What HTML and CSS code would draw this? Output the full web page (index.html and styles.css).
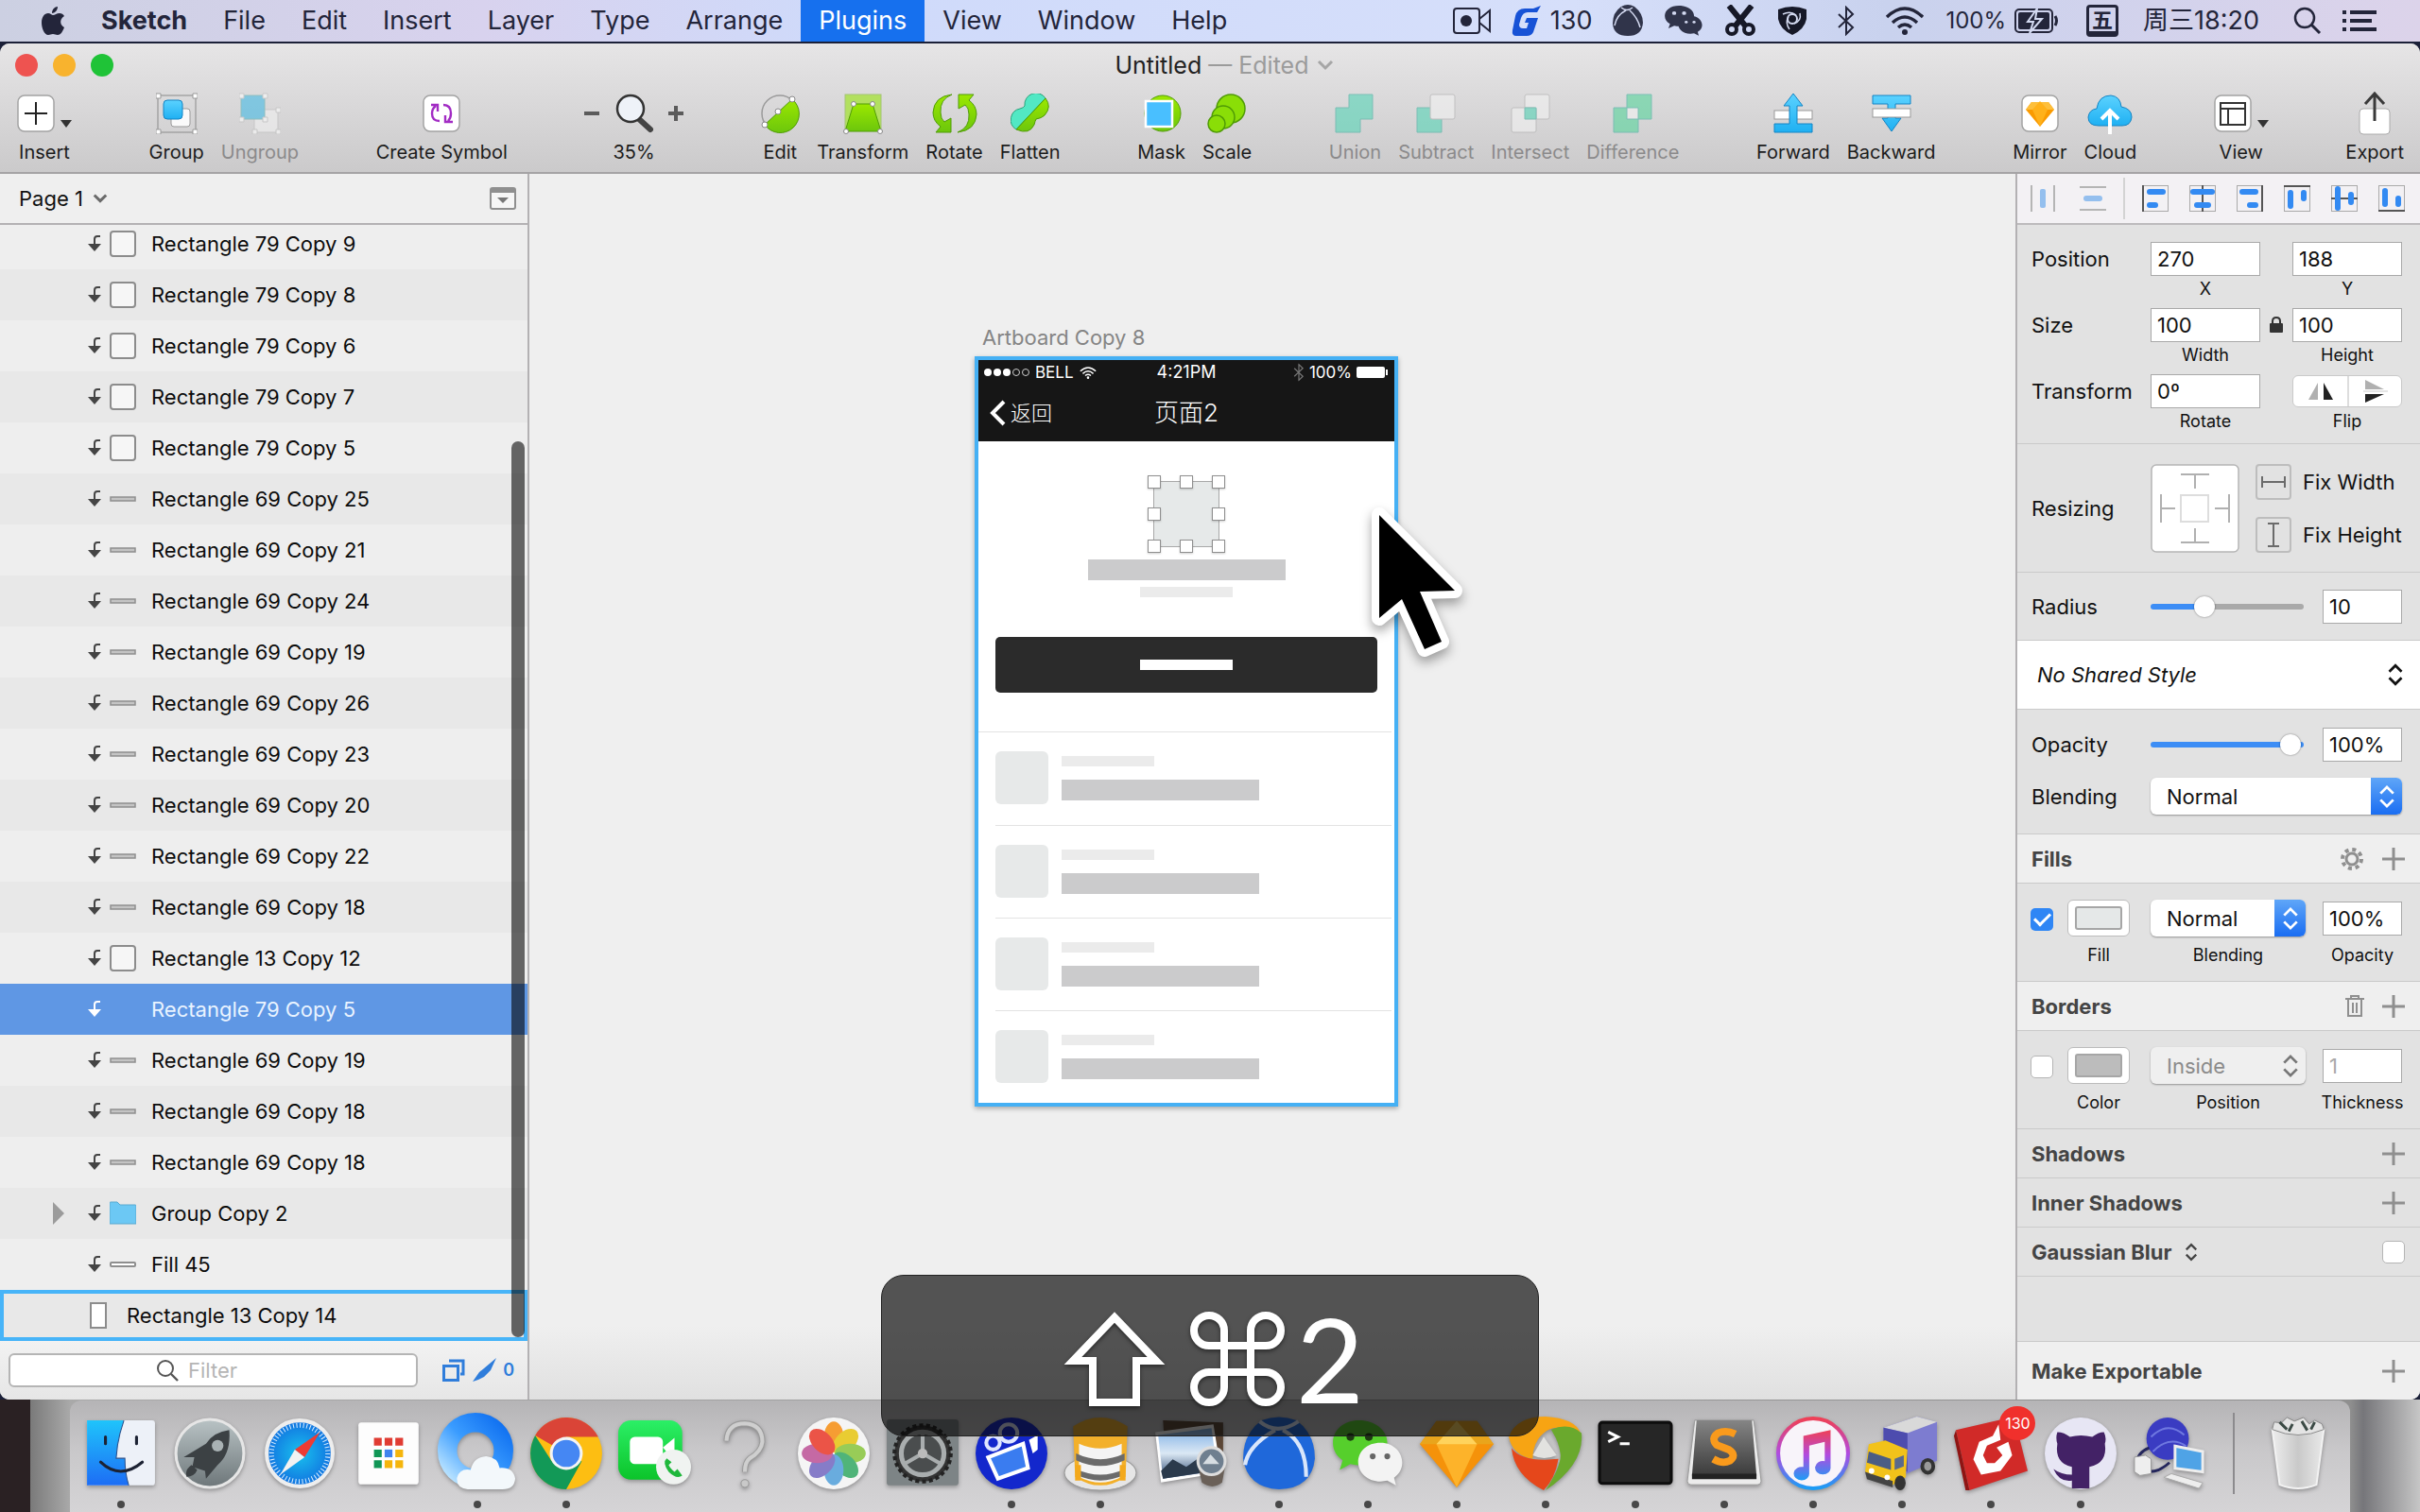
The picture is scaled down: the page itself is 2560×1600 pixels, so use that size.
FILE: index.html
```html
<!DOCTYPE html>
<html lang="en">
<head>
<meta charset="utf-8">
<title>Untitled — Edited</title>
<link rel="stylesheet" href="styles.css">
</head>
<body>
<svg class="defs" aria-hidden="true">
  <defs>
    <symbol id="mask" viewBox="0 0 16 20"><path d="M14 2H11Q8 2 8 5V12" fill="none" stroke="#444" stroke-width="2"/><path d="M1 10H15L8 18Z" fill="#444"/></symbol>
    <symbol id="mask-w" viewBox="0 0 16 20"><path d="M14 2H11Q8 2 8 5V12" fill="none" stroke="#fff" stroke-width="2"/><path d="M1 10H15L8 18Z" fill="#fff"/></symbol>
    <symbol id="square" viewBox="0 0 28 28"><rect x="1" y="1" width="26" height="26" rx="3" fill="#f6f6f6" stroke="#8c8c8c" stroke-width="2"/></symbol>
    <symbol id="bar" viewBox="0 0 28 28"><rect x="1" y="12" width="26" height="4" fill="#c4c4c4" stroke="#8e8e8e" stroke-width="1.5"/></symbol>
    <symbol id="plus" viewBox="0 0 24 24"><path d="M12 0V24M0 12H24" stroke="#8f8f8f" stroke-width="3"/></symbol>
    <symbol id="updown" viewBox="0 0 16 24"><path d="M2 9L8 3L14 9M2 15L8 21L14 15" fill="none" stroke="currentColor" stroke-width="2.5"/></symbol>
    <symbol id="bt" viewBox="0 0 20 32"><path d="M2 9L17 23L10 30V2L17 9L2 23" fill="none" stroke="currentColor" stroke-width="2"/></symbol>
    <symbol id="wifi" viewBox="0 0 42 30"><path d="M2 11Q21 -7 40 11M8 17Q21 5 34 17M14 22Q21 16 28 22" fill="none" stroke="currentColor" stroke-width="3.4"/><circle cx="21" cy="27" r="3" fill="currentColor"/></symbol>
    <symbol id="chat" viewBox="0 0 76 76"><path d="M29 4C13 4 2 14 2 27c0 8 4 14 10 18l-3 10 11-6c20 5 38-6 38-22C58 14 45 4 29 4z" fill="var(--a)"/><circle cx="20" cy="21" r="4" fill="var(--eye)"/><circle cx="39" cy="21" r="4" fill="var(--eye)"/><path d="M51 27c-14 0-23 9-23 20s10 20 23 20l7-1 9 5-2-8c16-11 8-36-14-36z" fill="var(--b)"/><circle cx="43" cy="41" r="3" fill="var(--eye2)"/><circle cx="58" cy="41" r="3" fill="var(--eye2)"/></symbol>
    <linearGradient id="gr" x1="0" y1="0" x2="0" y2="1"><stop offset="0" stop-color="#9be800"/><stop offset="1" stop-color="#6cc60c"/></linearGradient>
    <linearGradient id="bl" x1="0" y1="0" x2="0" y2="1"><stop offset="0" stop-color="#5bd2ff"/><stop offset="1" stop-color="#1fb0f2"/></linearGradient>
    <linearGradient id="finder" x1="0" y1="0" x2="0" y2="1"><stop offset="0" stop-color="#1fc4fb"/><stop offset="1" stop-color="#1d6df5"/></linearGradient>
    <linearGradient id="steel" x1="0" y1="0" x2="0" y2="1"><stop offset="0" stop-color="#b9c3c5"/><stop offset="1" stop-color="#6d7679"/></linearGradient>
    <radialGradient id="saf"><stop offset="0" stop-color="#19c1ee"/><stop offset="1" stop-color="#1172e0"/></radialGradient>
    <linearGradient id="qq" x1="1" y1="0" x2="0" y2="1"><stop offset="0" stop-color="#0f6ff0"/><stop offset=".5" stop-color="#3a9cff"/><stop offset="1" stop-color="#bfe6ff"/></linearGradient>
    <linearGradient id="ft" x1="0" y1="0" x2="0" y2="1"><stop offset="0" stop-color="#2bef66"/><stop offset="1" stop-color="#0cc42a"/></linearGradient>
    <linearGradient id="tun" x1="0" y1="0" x2="0" y2="1"><stop offset="0" stop-color="#ef4056"/><stop offset=".5" stop-color="#b14be0"/><stop offset="1" stop-color="#1c9cf5"/></linearGradient>
    <linearGradient id="subl" x1="0" y1="0" x2="0" y2="1"><stop offset="0" stop-color="#858585"/><stop offset="1" stop-color="#3b3b3b"/></linearGradient>
    <linearGradient id="sea" x1="0" y1="0" x2="0" y2="1"><stop offset="0" stop-color="#7fb0e6"/><stop offset=".5" stop-color="#dbe8f4"/><stop offset="1" stop-color="#2c4a74"/></linearGradient>
    <linearGradient id="bin" x1="0" y1="0" x2="1" y2="0"><stop offset="0" stop-color="#ededed"/><stop offset=".5" stop-color="#c9c9c9"/><stop offset="1" stop-color="#e9e9e9"/></linearGradient>
  </defs>
</svg>

<header class="menubar">
  <nav class="menus" aria-label="Application menu">
    <a class="menu apple" href="#" aria-label="Apple"><svg width="26" height="32" viewBox="0 0 26 32"><path d="M18 1c0 4-3 7-6 7 0-4 3-7 6-7zM25 23c-2 5-4 8-7 8-2 0-3-1-5-1s-3 1-5 1C4 31 1 24 1 18 1 12 4 8 8 8c2 0 4 2 5 2 2 0 4-2 7-2 2 0 4 1 5 3-6 4-4 10 0 12z" fill="#23253a"/></svg></a>
    <a class="menu app" href="#">Sketch</a>
    <a class="menu" href="#">File</a>
    <a class="menu" href="#">Edit</a>
    <a class="menu" href="#">Insert</a>
    <a class="menu" href="#">Layer</a>
    <a class="menu" href="#">Type</a>
    <a class="menu" href="#">Arrange</a>
    <a class="menu on" href="#">Plugins</a>
    <a class="menu" href="#">View</a>
    <a class="menu" href="#">Window</a>
    <a class="menu" href="#">Help</a>
  </nav>
  <div class="status">
    <svg width="40" height="28" viewBox="0 0 40 28"><rect x="1" y="1" width="27" height="26" rx="3" fill="none" stroke="#23253a" stroke-width="2"/><circle cx="14" cy="14" r="6" fill="#23253a"/><path d="M28 12L39 3V25L28 16" fill="none" stroke="#23253a" stroke-width="2"/></svg>
    <span class="pair"><svg width="32" height="34" viewBox="0 0 32 34"><path d="M31 1L27 8H17Q12 8 10 14L8 21Q8 25 12 25H16L18 19H14L16 14H28L23 29Q21 33 16 33H5Q0 33 1 27L4 12Q6 4 14 4H23Z" fill="#1752d6"/></svg>130</span>
    <svg width="32" height="34" viewBox="0 0 32 34"><path d="M9 2Q16-2 23 2 32 9 32 19 31 33 16 33 1 33 0 20 0 8 9 2z" fill="#30344a"/><path d="M9 3Q15 8 21 3M14 6Q4 11 2 22M18 6Q26 13 29 24" fill="none" stroke="#d3d9f0" stroke-width="1.500"/></svg>
    <svg class="tray-chat" width="42" height="36" viewBox="0 0 76 76" preserveAspectRatio="none"><use href="#chat"/></svg>
    <svg width="34" height="34" viewBox="0 0 34 34"><path d="M5 1L22 22M29 1L12 22" stroke="#161827" stroke-width="6"/><circle cx="8" cy="26" r="5" fill="none" stroke="#161827" stroke-width="4"/><circle cx="26" cy="26" r="5" fill="none" stroke="#161827" stroke-width="4"/></svg>
    <svg width="32" height="32" viewBox="0 0 32 32"><path d="M1 4Q16-2 31 4V14Q29 25 16 31 3 25 1 14z" fill="#161827"/><circle cx="16" cy="14" r="5" fill="none" stroke="#d3d9f0" stroke-width="2"/><path d="M6 9Q14 5 20 10M24 8Q26 16 18 19M13 25Q8 18 12 12" fill="none" stroke="#d3d9f0" stroke-width="1.500"/></svg>
    <svg class="tray-bt" width="20" height="32"><use href="#bt"/></svg>
    <svg width="42" height="30"><use href="#wifi"/></svg>
    <span class="pair batt">100%<svg width="46" height="26" viewBox="0 0 46 26"><rect x="1" y="1" width="39" height="24" rx="4" fill="none" stroke="#23253a" stroke-width="2"/><rect x="4" y="4" width="33" height="18" rx="2" fill="#23253a"/><path d="M43 8Q46 13 43 18" stroke="#23253a" stroke-width="3" fill="none"/><path d="M24 0L14 14H20L16 26L29 11H22Z" fill="#23253a" stroke="#d3d9f0" stroke-width="2"/></svg></span>
    <span class="ime">五</span>
    <time>周三18:20</time>
    <svg width="30" height="30" viewBox="0 0 30 30"><circle cx="12" cy="12" r="10" fill="none" stroke="#23253a" stroke-width="2.5"/><path d="M19 19L28 28" stroke="#23253a" stroke-width="3"/></svg>
    <svg width="36" height="22" viewBox="0 0 36 22"><path d="M0 2H4M8 2H36M0 11H4M8 11H31M0 20H4M8 20H36" stroke="#23253a" stroke-width="4"/></svg>
  </div>
</header>

<main class="window">
  <div class="chrome">
    <div class="titlebar">
      <div class="lights"><button class="red" aria-label="Close"></button><button class="amber" aria-label="Minimise"></button><button class="green" aria-label="Zoom"></button></div>
      <h1>Untitled <span>— Edited</span><svg width="18" height="12" viewBox="0 0 18 12"><path d="M2 2L9 9L16 2" fill="none" stroke="#a6a6a6" stroke-width="3"/></svg></h1>
    </div>
    <div class="toolbar">
      <button class="tool"><span class="ico drop"><svg width="40" height="40" viewBox="0 0 40 40"><rect x="1" y="1" width="38" height="38" rx="7" fill="#fff" stroke="#a3a3a3" stroke-width="1.5"/><path d="M20 8V32M8 20H32" stroke="#222" stroke-width="2"/></svg><i class="tri"></i></span>Insert</button>
      <div class="tools">
        <button class="tool"><span class="ico"><svg width="44" height="44" viewBox="0 0 44 44"><rect x="2" y="3" width="40" height="39" fill="none" stroke="#8a8a8a"/><rect x="16" y="17" width="20" height="19" rx="3" fill="#fafafa" stroke="#999"/><rect x="8" y="8" width="20" height="20" rx="4" fill="url(#bl)" stroke="#1484c4"/><path d="M0 1h5v5H0zM39 1h5v5h-5zM0 39h5v5H0zM39 39h5v5h-5z" fill="#fff" stroke="#999"/></svg></span>Group</button>
        <button class="tool off"><span class="ico"><svg width="44" height="44" viewBox="0 0 44 44"><rect x="16" y="18" width="25" height="24" fill="#f4f4f4" stroke="#bbb"/><rect x="2" y="3" width="25" height="25" rx="2" fill="#38b8e6" stroke="#5aa"/><path d="M0 1h5v5H0zM25 1h5v5h-5zM0 26h5v5H0zM25 26h5v5h-5zM39 16h5v5h-5zM14 39h5v5h-5zM39 39h5v5h-5z" fill="#fff" stroke="#bbb"/></svg></span>Ungroup</button>
      </div>
      <button class="tool"><span class="ico"><svg width="40" height="40" viewBox="0 0 40 40"><rect x="1" y="1" width="38" height="38" rx="7" fill="#fff" stroke="#a3a3a3" stroke-width="1.5"/><path d="M18 28Q10 28 10 20 10 15 14 12M9 11H16V18M22 11Q30 11 30 20 30 25 27 28M32 29H24V22" fill="none" stroke="#a22cc4" stroke-width="2.4"/></svg></span>Create Symbol</button>
      <div class="zoom">
        <button class="step" aria-label="Zoom out"><svg width="16" height="16" viewBox="0 0 16 16"><path d="M0 8H16" stroke="#5b5b5b" stroke-width="4"/></svg></button>
        <button class="tool"><span class="ico"><svg width="42" height="42" viewBox="0 0 42 42"><path d="M26 27L38 38" stroke="#444" stroke-width="6" stroke-linecap="round"/><circle cx="17" cy="16" r="14" fill="#eef2f8" stroke="#333" stroke-width="2.5"/></svg></span>35%</button>
        <button class="step" aria-label="Zoom in"><svg width="16" height="16" viewBox="0 0 16 16"><path d="M0 8H16M8 0V16" stroke="#5b5b5b" stroke-width="4"/></svg></button>
      </div>
      <div class="tools">
        <button class="tool"><span class="ico"><svg width="42" height="42" viewBox="0 0 42 42"><circle cx="21" cy="21" r="19" fill="none" stroke="#9a9a9a" stroke-width="1.5"/><path d="M34 6A20 20 0 1 1 5 33Z" fill="url(#gr)" stroke="#4f9b06"/><circle cx="34" cy="6" r="3" fill="#fff" stroke="#888"/><circle cx="19" cy="19" r="3" fill="#fff" stroke="#888"/><circle cx="5" cy="33" r="3" fill="#fff" stroke="#888"/></svg></span>Edit</button>
        <button class="tool"><span class="ico"><svg width="42" height="44" viewBox="0 0 42 44"><rect x="2" y="2" width="38" height="38" fill="#b2e05f" stroke="#a4c474"/><path d="M11 12H31L40 41H2Z" fill="url(#gr)" stroke="#4f9b06"/><g fill="#fff" stroke="#888"><circle cx="11" cy="12" r="2.5"/><circle cx="31" cy="12" r="2.5"/><circle cx="3" cy="41" r="2.5"/><circle cx="39" cy="41" r="2.5"/></g></svg></span>Transform</button>
        <button class="tool"><span class="ico"><svg width="48" height="42" viewBox="0 0 48 42"><path d="M21 1Q8 6 9 20 9 27 13 30L20 26V41H4L9 35Q1 29 1 20 2 3 21 1zM27 41Q40 36 39 22 39 15 35 12L28 16V1H44L39 7Q47 13 47 22 46 39 27 41z" fill="url(#gr)" stroke="#4f9b06"/></svg></span>Rotate</button>
        <button class="tool"><span class="ico"><svg width="42" height="42" viewBox="0 0 42 42"><path d="M37 5A12 12 0 0 0 15 13Q14 15 10 16A12 12 0 0 0 6 38Z" fill="#52e8c4" stroke="#2aa27a"/><path d="M37 5Q44 14 36 23 33 26 27 27 26 29 25 33 20 44 6 38Z" fill="url(#gr)" stroke="#4f9b06"/></svg></span>Flatten</button>
      </div>
      <div class="tools">
        <button class="tool"><span class="ico"><svg width="42" height="42" viewBox="0 0 42 42"><circle cx="22" cy="21" r="19" fill="url(#gr)" stroke="#4f9b06"/><rect x="4" y="8" width="28" height="27" fill="#49bfff" stroke="#fff" stroke-width="2.5"/></svg></span>Mask</button>
        <button class="tool"><span class="ico"><svg width="42" height="42" viewBox="0 0 42 42"><g fill="#8ade07" stroke="#4f9b06" stroke-width="1.5"><circle cx="25" cy="16" r="15"/><circle cx="17" cy="25" r="12"/><circle cx="10" cy="32" r="9"/></g></svg></span>Scale</button>
      </div>
      <div class="tools">
        <button class="tool off"><span class="ico"><svg width="42" height="42" viewBox="0 0 42 42"><path d="M15 1H40V27H27V41H1V15H15Z" fill="#4bd5b4" stroke="#3a9"/></svg></span>Union</button>
        <button class="tool off"><span class="ico"><svg width="42" height="42" viewBox="0 0 42 42"><path d="M1 15H27V41H1Z" fill="#4bd5b4" stroke="#3a9"/><rect x="15" y="1" width="26" height="26" rx="2" fill="#f5f5f5" stroke="#aaa"/></svg></span>Subtract</button>
        <button class="tool off"><span class="ico"><svg width="42" height="42" viewBox="0 0 42 42"><rect x="15" y="1" width="26" height="26" rx="2" fill="#f5f5f5" stroke="#aaa"/><rect x="1" y="15" width="26" height="26" rx="2" fill="#f5f5f5" stroke="#aaa"/><path d="M15 15H27V27H15Z" fill="#4bd5b4" stroke="#3a9"/></svg></span>Intersect</button>
        <button class="tool off"><span class="ico"><svg width="42" height="42" viewBox="0 0 42 42"><path d="M15 1H41V27H27V41H1V15H15Z" fill="#4bd596" stroke="#3a9"/><path d="M15 15H27V27H15Z" fill="#f5f5f5" stroke="#3a9"/></svg></span>Difference</button>
      </div>
      <div class="tools">
        <button class="tool"><span class="ico"><svg width="42" height="44" viewBox="0 0 42 44"><rect x="1" y="19" width="40" height="9" fill="#fff" stroke="#999"/><path d="M21 1L31 14H25V33H41V42H1V33H17V14H11Z" fill="url(#bl)" stroke="#1484c4"/></svg></span>Forward</button>
        <button class="tool"><span class="ico"><svg width="42" height="44" viewBox="0 0 42 44"><path d="M1 3H41V12H25V27H31L21 41L11 27H17V12H1Z" fill="url(#bl)" stroke="#1484c4"/><rect x="1" y="17" width="40" height="9" fill="#fff" stroke="#999"/></svg></span>Backward</button>
      </div>
      <div class="tools">
        <button class="tool"><span class="ico"><svg width="40" height="40" viewBox="0 0 40 40"><rect x="1" y="1" width="38" height="38" rx="7" fill="#fff" stroke="#a3a3a3" stroke-width="1.5"/><path d="M11 8H29L35 16L20 34L5 16Z" fill="#fa9a00"/><path d="M11 8H29L35 16H5Z" fill="#fdbf3c"/><path d="M12 16L20 7L28 16L20 34Z" fill="#ffb11a"/></svg></span>Mirror</button>
        <button class="tool"><span class="ico"><svg width="48" height="44" viewBox="0 0 48 44"><path d="M12 35Q1 35 1 26 2 18 10 17 12 3 25 3 35 4 36 15 47 17 47 26 46 35 37 35Z" fill="url(#bl)" stroke="#1484c4"/><path d="M24 44V20M15 28L24 19L33 28" fill="none" stroke="#fff" stroke-width="4"/></svg></span>Cloud</button>
      </div>
      <button class="tool"><span class="ico drop"><svg width="40" height="40" viewBox="0 0 40 40"><rect x="1" y="1" width="38" height="38" rx="7" fill="#fff" stroke="#a3a3a3" stroke-width="1.5"/><path d="M7 9H33V32H7ZM7 15H33M15 15V32" fill="none" stroke="#333" stroke-width="2"/></svg><i class="tri"></i></span>View</button>
      <button class="tool"><span class="ico"><svg width="34" height="46" viewBox="0 0 34 46"><rect x="1" y="18" width="32" height="27" rx="4" fill="#fff" stroke="#aaa"/><path d="M17 31V3M7 13L17 2L27 13" fill="none" stroke="#3a3a3a" stroke-width="3"/></svg></span>Export</button>
    </div>
  </div>

  <div class="panes">
    <aside class="layers">
      <div class="page-head">
        <button class="page">Page 1<svg width="16" height="12" viewBox="0 0 18 12"><path d="M2 2L9 9L16 2" fill="none" stroke="#6b6b6b" stroke-width="3.4"/></svg></button>
        <button class="icon" aria-label="Toggle pages"><svg width="28" height="24" viewBox="0 0 28 24"><rect x="1" y="1" width="26" height="22" rx="2" fill="#f6f6f6" stroke="#8f8f8f" stroke-width="2"/><path d="M1 1H27V6H1Z" fill="#8f8f8f"/><path d="M8 11H20L14 17Z" fill="#777"/></svg></button>
      </div>
      <div class="list-wrap">
        <ul class="list">
          <li><svg class="m"><use href="#mask"/></svg><svg class="s"><use href="#square"/></svg>Rectangle 79 Copy 9</li>
          <li><svg class="m"><use href="#mask"/></svg><svg class="s"><use href="#square"/></svg>Rectangle 79 Copy 8</li>
          <li><svg class="m"><use href="#mask"/></svg><svg class="s"><use href="#square"/></svg>Rectangle 79 Copy 6</li>
          <li><svg class="m"><use href="#mask"/></svg><svg class="s"><use href="#square"/></svg>Rectangle 79 Copy 7</li>
          <li><svg class="m"><use href="#mask"/></svg><svg class="s"><use href="#square"/></svg>Rectangle 79 Copy 5</li>
          <li><svg class="m"><use href="#mask"/></svg><svg class="s"><use href="#bar"/></svg>Rectangle 69 Copy 25</li>
          <li><svg class="m"><use href="#mask"/></svg><svg class="s"><use href="#bar"/></svg>Rectangle 69 Copy 21</li>
          <li><svg class="m"><use href="#mask"/></svg><svg class="s"><use href="#bar"/></svg>Rectangle 69 Copy 24</li>
          <li><svg class="m"><use href="#mask"/></svg><svg class="s"><use href="#bar"/></svg>Rectangle 69 Copy 19</li>
          <li><svg class="m"><use href="#mask"/></svg><svg class="s"><use href="#bar"/></svg>Rectangle 69 Copy 26</li>
          <li><svg class="m"><use href="#mask"/></svg><svg class="s"><use href="#bar"/></svg>Rectangle 69 Copy 23</li>
          <li><svg class="m"><use href="#mask"/></svg><svg class="s"><use href="#bar"/></svg>Rectangle 69 Copy 20</li>
          <li><svg class="m"><use href="#mask"/></svg><svg class="s"><use href="#bar"/></svg>Rectangle 69 Copy 22</li>
          <li><svg class="m"><use href="#mask"/></svg><svg class="s"><use href="#bar"/></svg>Rectangle 69 Copy 18</li>
          <li><svg class="m"><use href="#mask"/></svg><svg class="s"><use href="#square"/></svg>Rectangle 13 Copy 12</li>
          <li class="sel"><svg class="m"><use href="#mask-w"/></svg><svg class="s"></svg>Rectangle 79 Copy 5</li>
          <li><svg class="m"><use href="#mask"/></svg><svg class="s"><use href="#bar"/></svg>Rectangle 69 Copy 19</li>
          <li><svg class="m"><use href="#mask"/></svg><svg class="s"><use href="#bar"/></svg>Rectangle 69 Copy 18</li>
          <li><svg class="m"><use href="#mask"/></svg><svg class="s"><use href="#bar"/></svg>Rectangle 69 Copy 18</li>
          <li class="folder"><svg class="t" viewBox="0 0 12 24"><path d="M0 0L12 12L0 24Z" fill="#9b9b9b"/></svg><svg class="m"><use href="#mask"/></svg><svg class="s" viewBox="0 0 28 28"><path d="M0 3Q0 2 1 2H8L11 5H27Q28 5 28 6V25H0Z" fill="#6cc8f4" stroke="#58a9d0"/></svg>Group Copy 2</li>
          <li><svg class="m"><use href="#mask"/></svg><svg class="s" viewBox="0 0 28 28"><rect x="1" y="12" width="26" height="4" rx="1" fill="#fff" stroke="#8e8e8e" stroke-width="2"/></svg>Fill 45</li>
          <li class="target"><svg class="tall" viewBox="0 0 18 28"><rect x="1" y="1" width="16" height="26" fill="#fff" stroke="#8c8c8c" stroke-width="2"/></svg>Rectangle 13 Copy 14</li>
        </ul>
        <div class="thumb"></div>
      </div>
      <div class="filter">
        <label class="field"><svg width="24" height="24" viewBox="0 0 24 24"><circle cx="10" cy="10" r="8" fill="none" stroke="#555" stroke-width="2"/><path d="M16 16L23 23" stroke="#555" stroke-width="2.4"/></svg><input type="text" placeholder="Filter" aria-label="Filter"></label>
        <button class="icon" aria-label="Show copies"><svg width="24" height="24" viewBox="0 0 24 24"><rect x="1.500" y="7.500" width="15" height="15" fill="none" stroke="#2f7ddb" stroke-width="3"/><path d="M7 2H22V16H19" fill="none" stroke="#2f7ddb" stroke-width="3"/></svg></button>
        <button class="icon slices"><svg width="26" height="26" viewBox="0 0 26 26"><path d="M25 0L19 13 12 20 6 23 0 25 7 15 12 11Z" fill="#2f7ddb"/></svg>0</button>
      </div>
    </aside>

    <section class="canvas">
      <div class="artboard">
        <span class="name">Artboard Copy 8</span>
        <div class="frame">
          <div class="nav">
            <div class="cell">
              <span class="carrier"><svg width="48" height="12" viewBox="0 0 48 12"><g fill="#fff"><circle cx="4" cy="6" r="4"/><circle cx="14" cy="6" r="4"/><circle cx="24" cy="6" r="4"/></g><g fill="none" stroke="#ccc"><circle cx="34" cy="6" r="3.500"/><circle cx="44" cy="6" r="3.500"/></g></svg>BELL<svg width="18" height="13" viewBox="0 0 42 30"><use href="#wifi"/></svg></span>
              <span class="clock">4:21PM</span>
              <span class="power"><svg class="dim" width="12" height="20" viewBox="0 0 20 32"><use href="#bt"/></svg>100%<svg width="34" height="14" viewBox="0 0 34 14"><rect x="0" y="1" width="30" height="12" rx="2" fill="#fff"/><path d="M32 4V10" stroke="#fff" stroke-width="2"/></svg></span>
            </div>
            <div class="title">
              <a class="back" href="#"><svg width="17" height="28" viewBox="0 0 17 28"><path d="M15 2L3 14L15 26" fill="none" stroke="#fff" stroke-width="4"/></svg>返回</a>
              <span>页面2</span>
            </div>
          </div>
          <div class="hero">
            <div class="pic"><i class="h a"></i><i class="h b"></i><i class="h c"></i><i class="h d"></i><i class="h e"></i><i class="h f"></i><i class="h g"></i><i class="h i"></i></div>
            <div class="dark"></div>
            <div class="light"></div>
            <div class="cta"><div></div></div>
          </div>
          <div class="entry"><div class="avatar"></div><div class="lines"><div class="light"></div><div class="dark"></div></div></div>
          <div class="entry"><div class="avatar"></div><div class="lines"><div class="light"></div><div class="dark"></div></div></div>
          <div class="entry"><div class="avatar"></div><div class="lines"><div class="light"></div><div class="dark"></div></div></div>
          <div class="entry"><div class="avatar"></div><div class="lines"><div class="light"></div><div class="dark"></div></div></div>
        </div>
      </div>
      <svg class="cursor" width="130" height="190" viewBox="0 0 130 190"><path d="M24 23L104 103L67 104L90 157L72 165L48 112L24 132Z" fill="#000" stroke="#fff" stroke-width="16" stroke-linejoin="round" paint-order="stroke"/></svg>
    </section>

    <aside class="inspector">
      <div class="align">
        <button aria-label="Distribute horizontally"><svg width="28" height="28" viewBox="0 0 28 28"><path d="M2 0V28M26 0V28" stroke="#b5b5b5" stroke-width="2"/><rect x="11" y="4" width="6" height="20" rx="2" fill="#94bfee"/></svg></button>
        <button class="dv" aria-label="Distribute vertically"><svg width="28" height="28" viewBox="0 0 28 28"><path d="M0 2H28M0 26H28" stroke="#b5b5b5" stroke-width="2"/><rect x="4" y="11" width="20" height="6" rx="3" fill="#94bfee"/></svg></button>
        <hr>
        <div class="aligns">
        <button aria-label="Align left"><svg width="28" height="28" viewBox="0 0 28 28"><rect x=".5" y=".5" width="27" height="27" fill="none" stroke="#aaa"/><path d="M1 0V28" stroke="#555" stroke-width="2"/><rect x="5" y="4" width="20" height="6" rx="3" fill="#338af2"/><rect x="5" y="18" width="12" height="6" rx="3" fill="#338af2"/></svg></button>
        <button aria-label="Align centre"><svg width="28" height="28" viewBox="0 0 28 28"><rect x=".5" y=".5" width="27" height="27" fill="none" stroke="#aaa"/><path d="M14 0V28" stroke="#555" stroke-width="2"/><rect x="1" y="4" width="26" height="6" rx="3" fill="#338af2"/><rect x="5" y="18" width="18" height="6" rx="3" fill="#338af2"/></svg></button>
        <button aria-label="Align right"><svg width="28" height="28" viewBox="0 0 28 28"><rect x=".5" y=".5" width="27" height="27" fill="none" stroke="#aaa"/><path d="M27 0V28" stroke="#555" stroke-width="2"/><rect x="3" y="4" width="20" height="6" rx="3" fill="#338af2"/><rect x="11" y="18" width="12" height="6" rx="3" fill="#338af2"/></svg></button>
        <button aria-label="Align top"><svg width="28" height="28" viewBox="0 0 28 28"><rect x=".5" y=".5" width="27" height="27" fill="none" stroke="#aaa"/><path d="M0 1H28" stroke="#555" stroke-width="2"/><rect x="4" y="5" width="6" height="20" rx="3" fill="#338af2"/><rect x="18" y="5" width="6" height="12" rx="3" fill="#338af2"/></svg></button>
        <button aria-label="Align middle"><svg width="28" height="28" viewBox="0 0 28 28"><rect x=".5" y=".5" width="27" height="27" fill="none" stroke="#aaa"/><path d="M0 14H28" stroke="#555" stroke-width="2"/><rect x="4" y="1" width="6" height="26" rx="3" fill="#338af2"/><rect x="18" y="7" width="6" height="14" rx="3" fill="#338af2"/></svg></button>
        <button aria-label="Align bottom"><svg width="28" height="28" viewBox="0 0 28 28"><rect x=".5" y=".5" width="27" height="27" fill="none" stroke="#aaa"/><path d="M0 27H28" stroke="#555" stroke-width="2"/><rect x="4" y="3" width="6" height="20" rx="3" fill="#338af2"/><rect x="18" y="11" width="6" height="12" rx="3" fill="#338af2"/></svg></button>
        </div>
      </div>

      <div class="geometry">
        <span class="label">Position</span>
        <div class="unit"><input id="x" type="text" value="270"><label for="x">X</label></div>
        <span></span>
        <div class="unit"><input id="y" type="text" value="188"><label for="y">Y</label></div>
        <span class="label">Size</span>
        <div class="unit"><input id="w" type="text" value="100"><label for="w">Width</label></div>
        <button class="lock" aria-label="Lock proportions"><svg width="14" height="18" viewBox="0 0 14 18"><rect y="7" width="14" height="10" rx="1" fill="#333"/><path d="M3 8V5Q3 1 7 1T11 5V8" fill="none" stroke="#333" stroke-width="2"/></svg></button>
        <div class="unit"><input id="h" type="text" value="100"><label for="h">Height</label></div>
        <span class="label">Transform</span>
        <div class="unit"><input id="r" type="text" value="0º"><label for="r">Rotate</label></div>
        <span></span>
        <div class="unit"><div class="flip"><button aria-label="Flip horizontally"><svg width="30" height="22" viewBox="0 0 30 22"><path d="M12 2V20H2Z" fill="#b0b0b0"/><path d="M18 2V20H28Z" fill="#222"/></svg></button><button aria-label="Flip vertically"><svg width="26" height="24" viewBox="0 0 26 24"><path d="M2 10V0L22 10Z" fill="#b0b0b0"/><path d="M0 12H26" stroke="#ccc"/><path d="M2 15V24L22 15Z" fill="#222"/></svg></button></div><span>Flip</span></div>
      </div>

      <div class="resizing">
        <span class="label">Resizing</span>
        <svg class="pins" viewBox="0 0 94 94"><rect x="1" y="1" width="92" height="92" rx="5" fill="#fff" stroke="#b5b5b5" stroke-width="1.500"/><path d="M32 11H62M47 11V26M32 83H62M47 83V68M11 32V62M11 47H26M83 32V62M83 47H68" stroke="#b0b0b0" stroke-width="2"/><rect x="32" y="33" width="29" height="28" fill="none" stroke="#ddd" stroke-width="2"/></svg>
        <div class="fixes">
          <label><button aria-label="Fix Width"><svg width="26" height="14" viewBox="0 0 26 14"><path d="M1 1V13M25 1V13M1 7H25" stroke="#6b6b6b" stroke-width="2"/></svg></button>Fix Width</label>
          <label><button aria-label="Fix Height"><svg width="14" height="26" viewBox="0 0 14 26"><path d="M1 1H13M1 25H13M7 1V25" stroke="#6b6b6b" stroke-width="2"/></svg></button>Fix Height</label>
        </div>
      </div>

      <div class="slide radius"><label class="label" for="rad">Radius</label><input class="range mid" id="rad" type="range" min="0" max="100" value="33"><input type="text" value="10" aria-label="Radius value"></div>

      <button class="shared"><em>No Shared Style</em><svg width="18" height="26"><use href="#updown"/></svg></button>

      <div class="blend">
        <div class="slide"><label class="label" for="op">Opacity</label><input class="range full" id="op" type="range" min="0" max="100" value="98"><input type="text" value="100%" aria-label="Opacity value"></div>
        <div class="slide"><label class="label" for="bm">Blending</label><div class="pick wide"><select id="bm"><option>Normal</option></select><i><svg width="18" height="28"><use href="#updown"/></svg></i></div></div>
      </div>

      <div class="head lit"><h2>Fills</h2><button class="icon" aria-label="Fill settings"><svg width="26" height="26" viewBox="0 0 26 26"><circle cx="13" cy="13" r="6" fill="none" stroke="#8f8f8f" stroke-width="3"/><circle cx="13" cy="13" r="10" fill="none" stroke="#8f8f8f" stroke-width="4" stroke-dasharray="4 3.850"/></svg></button><button class="icon" aria-label="Add fill"><svg width="24" height="24"><use href="#plus"/></svg></button></div>
      <div class="paint">
        <input type="checkbox" checked aria-label="Fill enabled">
        <div class="unit"><button class="swatch" id="fc" aria-label="Fill colour"><i class="pale"></i></button><label for="fc">Fill</label></div>
        <div class="unit"><div class="pick"><select id="fb"><option>Normal</option></select><i><svg width="18" height="28"><use href="#updown"/></svg></i></div><label for="fb">Blending</label></div>
        <div class="unit last"><input id="fo" type="text" value="100%"><label for="fo">Opacity</label></div>
      </div>

      <div class="head lit"><h2>Borders</h2><button class="icon" aria-label="Delete border"><svg width="20" height="24" viewBox="0 0 20 24"><path d="M0 4H20M6 4V1H14V4M3 4V22H17V4M8 8V19M12 8V19" fill="none" stroke="#8f8f8f" stroke-width="2"/></svg></button><button class="icon" aria-label="Add border"><svg width="24" height="24"><use href="#plus"/></svg></button></div>
      <div class="paint">
        <input type="checkbox" aria-label="Border enabled">
        <div class="unit"><button class="swatch" id="bc" aria-label="Border colour"><i></i></button><label for="bc">Color</label></div>
        <div class="unit"><div class="pick dis"><select id="bp" disabled><option>Inside</option></select><i><svg width="18" height="28"><use href="#updown"/></svg></i></div><label for="bp">Position</label></div>
        <div class="unit last"><input id="thick" type="text" value="1" disabled><label for="thick">Thickness</label></div>
      </div>

      <div class="head"><h2>Shadows</h2><button class="icon" aria-label="Add shadow"><svg width="24" height="24"><use href="#plus"/></svg></button></div>
      <div class="head"><h2>Inner Shadows</h2><button class="icon" aria-label="Add inner shadow"><svg width="24" height="24"><use href="#plus"/></svg></button></div>
      <div class="head"><h2>Gaussian Blur<svg width="14" height="22"><use href="#updown"/></svg></h2><input type="checkbox" aria-label="Gaussian Blur"></div>
      <div class="spacer"></div>
      <div class="head lit export"><h2>Make Exportable</h2><button class="icon" aria-label="Add export"><svg width="24" height="24"><use href="#plus"/></svg></button></div>
    </aside>
  </div>
</main>

<footer class="desk">
  <div class="dock">
    <div class="app-slot run"><svg viewBox="0 0 76 76"><rect x="3" y="4" width="70" height="67" rx="3" fill="#edf1f8"/><path d="M3 4H41Q34 24 33 43H42Q42 58 46 71H3Z" fill="url(#finder)"/><path d="M41 4Q34 24 33 43H42Q42 58 46 71" fill="none" stroke="#2a4f8a"/><path d="M22 21V28M54 21V28M17 47Q37 66 60 47" fill="none" stroke="#1c2233" stroke-width="3" stroke-linecap="round"/></svg></div>
    <div class="app-slot"><svg viewBox="0 0 76 76"><circle cx="38" cy="38" r="35" fill="url(#steel)" stroke="#e6e6e6" stroke-width="3"/><path d="M58 14Q42 16 34 28L24 34 11 42 22 42 20 52 33 56 34 64 46 50Q60 38 58 14zM19 50Q12 55 14 62 22 62 25 55z" fill="#3c4144"/><circle cx="46" cy="30" r="6" fill="#a9b2b4"/></svg></div>
    <div class="app-slot"><svg viewBox="0 0 76 76"><circle cx="38" cy="38" r="34" fill="url(#saf)" stroke="#eee" stroke-width="4"/><circle cx="38" cy="38" r="29" fill="none" stroke="#d8ecff" stroke-width="5" stroke-dasharray="1 2.500"/><path d="M59 16L43 42 33 34Z" fill="#ee3b33"/><path d="M18 60L33 34 43 42Z" fill="#f2f2f2"/></svg></div>
    <div class="app-slot"><svg viewBox="0 0 76 76"><rect x="7" y="6" width="62" height="64" rx="3" fill="#fdfdfd"/><g fill="#e03c33"><path d="M23 22h8v8h-8zM34 22h8v8h-8zM45 22h8v8h-8z"/></g><path d="M23 34h8v8h-8zM23 45h8v8h-8z" fill="#109655"/><path d="M34 34h8v8h-8z" fill="#4083ee"/><path d="M45 34h8v8h-8zM34 45h8v8h-8zM45 45h8v8h-8z" fill="#f5b50c"/></svg></div>
    <div class="app-slot run"><svg viewBox="0 0 76 76"><circle cx="36" cy="35" r="29" fill="none" stroke="url(#qq)" stroke-width="20"/><path d="M28 75Q16 74 17 63 20 53 31 55 34 42 47 41 59 42 61 53 75 52 77 64 76 75 64 75Z" fill="#f3f8fb"/></svg></div>
    <div class="app-slot run"><svg viewBox="0 0 76 76"><circle cx="38" cy="38" r="37" fill="#fdbe12"/><path d="M38 38L6 19.500A37 37 0 0 1 71 21H38Z" fill="#da4437"/><path d="M6 19.500A37 37 0 0 0 38 75L54 46 23 46Z" fill="#129957"/><circle cx="38" cy="38" r="17" fill="#f4f4f4"/><circle cx="38" cy="38" r="14" fill="#4587f3"/></svg></div>
    <div class="app-slot"><svg viewBox="0 0 76 76"><rect x="0" y="4" width="66" height="61" rx="13" fill="url(#ft)"/><rect x="12" y="21" width="34" height="28" rx="5" fill="#fff"/><path d="M46 32L58 22V46Z" fill="#fff"/><circle cx="57" cy="52" r="18" fill="#f0f3f1"/><path d="M50 43Q45 47 52 57 60 65 66 61L61 54 58 57Q53 53 52 50L55 47Z" fill="#1fb83c"/></svg></div>
    <div class="app-slot"><svg viewBox="0 0 76 76"><path d="M19 25Q20 7 38 7 56 8 56 26 55 36 43 43 38 47 38 57" fill="none" stroke="#9b9b9b" stroke-width="6"/><path d="M19 25Q20 7 38 7 56 8 56 26 55 36 43 43 38 47 38 57" fill="none" stroke="#cfcfcf" stroke-width="4"/><circle cx="38" cy="69" r="4" fill="#c9c9c9" stroke="#999"/></svg></div>
    <div class="app-slot"><svg viewBox="0 0 76 76"><circle cx="38" cy="38" r="37" fill="#f5f5f5"/><g opacity=".9"><ellipse cx="38" cy="21" rx="10" ry="16" fill="#f7941f"/><ellipse cx="38" cy="21" rx="10" ry="16" fill="#e8c81e" transform="rotate(45 38 38)"/><ellipse cx="38" cy="21" rx="10" ry="16" fill="#8fc846" transform="rotate(90 38 38)"/><ellipse cx="38" cy="21" rx="10" ry="16" fill="#3fae6c" transform="rotate(135 38 38)"/><ellipse cx="38" cy="21" rx="10" ry="16" fill="#5aa5dc" transform="rotate(180 38 38)"/><ellipse cx="38" cy="21" rx="10" ry="16" fill="#7a6fc4" transform="rotate(225 38 38)"/><ellipse cx="38" cy="21" rx="10" ry="16" fill="#c05a9c" transform="rotate(270 38 38)"/><ellipse cx="38" cy="21" rx="10" ry="16" fill="#ea4335" transform="rotate(315 38 38)"/></g></svg></div>
    <div class="app-slot"><svg viewBox="0 0 76 76"><rect x="1" y="3" width="74" height="68" rx="3" fill="#7d8486"/><circle cx="38" cy="38" r="29" fill="#333" stroke="#222" stroke-width="4" stroke-dasharray="4 3"/><circle cx="38" cy="38" r="22" fill="#4a4d4e" stroke="#a9adae" stroke-width="5"/><path d="M38 38V16M38 38L19 49M38 38L57 49" stroke="#a9adae" stroke-width="4"/><circle cx="38" cy="38" r="5" fill="#bbb"/></svg></div>
    <div class="app-slot run"><svg viewBox="0 0 76 76"><circle cx="38" cy="38" r="37" fill="#1327cc"/><circle cx="19" cy="27" r="7" fill="none" stroke="#dfe6ff" stroke-width="4"/><circle cx="35" cy="17" r="9" fill="none" stroke="#dfe6ff" stroke-width="4"/><path d="M14 42L50 28 55 53 24 64Z" fill="#3a7cf0" stroke="#fff" stroke-width="4"/><path d="M56 24L65 19V34L60 38Z" fill="#fff"/></svg></div>
    <div class="app-slot run"><svg viewBox="0 0 76 76"><ellipse cx="38" cy="58" rx="37" ry="18" fill="#e6e6e6" stroke="#999"/><path d="M10 10Q38-8 66 10L64 62Q38 80 12 62Z" fill="#f3b02a"/><path d="M16 28Q38 38 60 28V62Q38 74 16 62Z" fill="#f4f4f4"/><path d="M13 38Q38 50 63 38V45Q38 57 13 45ZM13 54Q38 66 63 54V60Q38 72 13 60Z" fill="#6b6b6b"/><path d="M15 50V66M61 50V66" stroke="#f3a91c" stroke-width="6"/></svg></div>
    <div class="app-slot"><svg viewBox="0 0 76 76"><path d="M10 4L72 6V62L14 60Z" fill="#5b4636"/><path d="M2 16L62 8 70 58 8 68Z" fill="#fff"/><path d="M5 19L60 12 66 56 10 64Z" fill="url(#sea)"/><path d="M8 56L20 44 34 52 48 42 50 58 10 64Z" fill="#2b3a4c"/><path d="M45 46H75L71 68Q61 76 50 68z" fill="#6a6058"/><circle cx="60" cy="46" r="14" fill="#6f7f8f" stroke="#ddd" stroke-width="3"/><path d="M51 49L59 39 68 49Z" fill="#d6dde2"/></svg></div>
    <div class="app-slot run"><svg viewBox="0 0 76 76"><path d="M20 4Q38-3 56 4 75 18 75 43 72 74 38 75 5 73 1 43 1 18 20 4z" fill="#1f68da"/><path d="M18 5Q36 20 58 5M34 14Q6 30 3 50M42 14Q66 26 66 62" fill="none" stroke="#d9e6fb" stroke-width="4"/></svg></div>
    <div class="app-slot run dock-chat"><svg viewBox="0 0 76 76"><use href="#chat"/></svg></div>
    <div class="app-slot run"><svg viewBox="0 0 80 76"><path d="M18 3H62L80 28 40 75 0 28Z" fill="#f5920a"/><path d="M18 3H62L80 28H0Z" fill="#e9a51c"/><path d="M18 28L40 3 62 28 40 75Z" fill="#fdb32a"/><path d="M18 28L40 3 62 28Z" fill="#ffd35c"/></svg></div>
    <div class="app-slot run"><svg viewBox="0 0 80 80"><path d="M0 22Q8 0 40 0 72 2 78 18 50 6 38 18 26 28 26 46 4 42 0 22z" fill="#f7a413"/><path d="M3 34Q14 50 54 46 50 68 38 80 6 64 3 34z" fill="#e5471b"/><path d="M46 14Q66 6 79 18 82 52 40 80 58 52 56 40 54 26 46 14z" fill="#6aa92d"/><path d="M38 22L52 42Q38 48 26 42Z" fill="#e2e2e0"/></svg></div>
    <div class="app-slot run"><svg viewBox="0 0 76 76"><rect x="1" y="6" width="74" height="63" rx="3" fill="#262626" stroke="#0d0d0d" stroke-width="3"/><path d="M10 16L20 21 10 26M22 28H32" fill="none" stroke="#fff" stroke-width="3"/></svg></div>
    <div class="app-slot run"><svg viewBox="0 0 80 76"><path d="M8 2H72L80 68Q80 72 76 72H4Q0 72 0 68Z" fill="#ececec" stroke="#999"/><path d="M10 2H70L75 62H5Z" fill="url(#subl)"/><path d="M5 60H75V66H5Z" fill="#222"/><path d="M52 17Q42 12 33 16 25 22 32 29L45 34Q54 40 46 46 38 50 28 44" fill="none" stroke="#f99a1c" stroke-width="8"/></svg></div>
    <div class="app-slot run"><svg viewBox="0 0 76 76"><circle cx="38" cy="38" r="36" fill="#f8f4fa" stroke="url(#tun)" stroke-width="4"/><path d="M28 20L56 14V52A8 7 0 1 1 50 46V26L34 30V58A8 7 0 1 1 28 52Z" fill="url(#tun)"/></svg></div>
    <div class="app-slot run"><svg viewBox="0 0 80 80"><path d="M20 12L56 0 78 6V48L40 64 20 46Z" fill="#7d7cd0"/><path d="M20 12L56 0 78 6 46 18Z" fill="#d9d9d9"/><path d="M20 12L46 18V60L20 50Z" fill="#4d4cae"/><ellipse cx="68" cy="54" rx="8" ry="9" fill="#333"/><ellipse cx="68" cy="54" rx="4" ry="5" fill="#999"/><path d="M4 30L22 26 46 36 44 66 30 74 0 60Z" fill="#f2c21a"/><path d="M4 38L28 46V58L2 50Z" fill="#4b5d84"/><path d="M32 46L42 42V54L32 58Z" fill="#5a6a8c"/><path d="M0 60L30 70V77L2 68Z" fill="#444"/><ellipse cx="38" cy="72" rx="6" ry="8" fill="#333"/><circle cx="7" cy="59" r="3" fill="#fff"/><circle cx="24" cy="66" r="3" fill="#fff"/></svg></div>
    <div class="app-slot run"><svg viewBox="0 0 76 76"><path d="M2 14L62 0 76 56 16 76Z" fill="#d12a28"/><path d="M2 14L0 20 12 76 16 76Z" fill="#8f1413"/><path d="M46 8L40 20 26 26 20 44 28 60 48 56 60 40 56 26 44 32 50 40 42 48 34 48 30 40 34 30 48 24Z" fill="#fff"/></svg><span class="badge">130</span></div>
    <div class="app-slot run"><svg viewBox="0 0 76 76"><circle cx="38" cy="38" r="37" fill="#e7e6f4"/><path d="M14 16Q21 16 27 21 38 18 50 21 56 16 62 16 65 22 63 28 66 48 47 52V74H29V66Q16 68 10 54 18 60 29 60V52Q11 48 14 28 12 22 14 16z" fill="#432266"/></svg></div>
    <div class="app-slot"><svg viewBox="0 0 80 80"><circle cx="38" cy="24" r="23" fill="#3a3cc2"/><path d="M20 22Q38 4 56 20M22 38Q40 20 58 32" fill="none" stroke="#6f78e0" stroke-width="2"/><path d="M18 34Q2 40 6 56 22 66 40 50" fill="none" stroke="#24265c" stroke-width="3"/><path d="M2 44L14 42 20 46V62L8 64 2 60Z" fill="#eee" stroke="#999"/><path d="M46 32L76 38V60L46 56Z" fill="#4fa3e6" stroke="#eee" stroke-width="3"/><path d="M34 66L42 62 76 72 72 78Z" fill="#eee" stroke="#aaa"/></svg></div>
    <hr>
    <div class="trash"><svg viewBox="0 0 64 80"><path d="M4 14L12 74Q32 82 52 74L60 14Z" fill="url(#bin)" stroke="#f3f3f3" stroke-width="2"/><path d="M4 14Q32 26 60 14L58 8 50 4 44 8 38 1 28 5 20 1 14 7 6 6Z" fill="#e4e4e4" stroke="#888"/><path d="M12 6L20 14M26 8L22 16M36 5L42 15M50 6L46 14" stroke="#3b4a45" stroke-width="3"/></svg></div>
  </div>
</footer>

<div class="keys" role="status" aria-label="Shift Command 2">
  <svg width="108" height="104" viewBox="0 0 108 104"><path d="M54 8L98 54H77V98H31V54H10Z" fill="none" stroke="#fff" stroke-width="8"/></svg>
  <svg width="100" height="100" viewBox="0 0 100 100"><path d="M36 20V80A16 16 0 1 1 20 64H80A16 16 0 1 1 64 80V20A16 16 0 1 1 80 36H20A16 16 0 1 1 36 20Z" fill="none" stroke="#fff" stroke-width="8"/></svg>
  <span>2</span>
</div>
</body>
</html>
```
FILE: styles.css
```css
* { box-sizing: border-box; }
body {
  margin: 0;
  min-height: 100vh;
  display: flex;
  flex-direction: column;
  position: relative;
  background: #1b2038;
  font: 22px/26px Inter, "Noto Sans CJK SC", sans-serif;
  color: #111;
}
button, input, select { font: inherit; color: inherit; margin: 0; }
button { border: 0; padding: 0; background: none; }
a { color: inherit; text-decoration: none; }
svg { display: block; flex: none; }
ul, h1, h2 { margin: 0; padding: 0; font-weight: 400; list-style: none; }
.defs { position: absolute; width: 0; height: 0; }

/* menu bar */
.menubar {
  height: 44px;
  margin-bottom: 2px;
  display: flex;
  justify-content: space-between;
  background: linear-gradient(90deg, #ccd0e2, #d8d2ee 20%, #cfdafa 34%, #d6dffa 65%, #c9d2ee 78%, #dcd3ea);
  color: #23253a;
  font-size: 27px;
}
.menus, .status, .pair { display: flex; align-items: center; }
.menus { padding-left: 24px; }
.menu { height: 44px; padding: 0 19px; line-height: 44px; }
.apple { display: flex; align-items: center; }
.app { font-weight: 700; }
.on { background: #1670ee; color: #fff; }
.status { gap: 22px; padding-right: 46px; }
.pair { gap: 9px; }
.batt { font-size: 24px; }
.tray-chat { --a: #30344a; --b: #30344a; --eye: #d3d9f0; --eye2: #d3d9f0; }
.status .tray-bt { margin: 0 9px; }
.status time { margin: 0 14px 0 4px; }
.ime { width: 34px; height: 34px; margin-left: 8px; border: 3px solid #23253a; border-bottom-width: 6px; border-radius: 4px; font-size: 22px; line-height: 26px; text-align: center; font-weight: 700; }

/* window */
.window { flex: 1; display: flex; flex-direction: column; border-radius: 10px; overflow: hidden; background: #efefef; }
.chrome { background: linear-gradient(#e6e5e6, #cbcacb); border-bottom: 2px solid #a5a3a5; }
.titlebar { height: 46px; display: grid; grid-template-columns: 1fr auto 1fr; align-items: center; padding: 0 16px; }
.lights { display: flex; gap: 16px; }
.lights button { width: 24px; height: 24px; border-radius: 50%; }
.red { background: #ee5350; }
.amber { background: #f8b32e; }
.green { background: #1fc337; }
.titlebar h1 { display: flex; align-items: center; font-size: 25px; color: #222; white-space: pre; padding-left: 30px; }
.titlebar h1 span { color: #9b9b9b; }
.titlebar h1 svg { margin-left: 8px; }
.toolbar { display: flex; justify-content: space-between; padding: 6px 17px 9px 18px; }
.tools { display: flex; gap: 18px; }
.tool { display: flex; flex-direction: column; align-items: center; gap: 7px; font-size: 20px; line-height: 24px; color: #1c1c1c; }
.ico { height: 44px; display: flex; align-items: center; justify-content: center; }
.drop { gap: 6px; }
.tri { margin-top: 22px; border: 6px solid transparent; border-top: 8px solid #333; border-bottom: 0; }
.off { color: #8b8a8b; }
.off svg { opacity: .55; }
.zoom { display: flex; gap: 14px; }
.step { height: 44px; display: flex; align-items: center; }

.panes { flex: 1; display: grid; grid-template-columns: 560px 1fr 428px; }

/* layer list */
.layers { display: flex; flex-direction: column; border-right: 2px solid #b3b1b3; background: #efefef; }
.page-head { height: 54px; display: flex; align-items: center; justify-content: space-between; padding: 0 12px 0 20px; border-bottom: 2px solid #b3b1b3; }
.page { display: flex; align-items: center; gap: 10px; }
.list-wrap { flex: 1 1 0; position: relative; overflow: hidden; display: flex; flex-direction: column; justify-content: flex-end; }
.list li { height: 54px; display: flex; align-items: center; padding-left: 92px; background: #eee; color: #0c0c0c; }
.list li:nth-child(even) { background: #e8e8e8; }
.list li.sel { background: #5f97e4; color: #e9f3ff; }
.list li.folder { padding-left: 56px; }
.list li.target { border: 4px solid #47b4f8; padding-left: 91px; }
.m { width: 16px; height: 20px; margin-right: 8px; }
.s { width: 28px; height: 28px; margin-right: 16px; }
.t { width: 12px; height: 24px; margin-right: 24px; }
.tall { width: 18px; height: 28px; margin-right: 21px; }
.thumb { position: absolute; right: 3px; top: 229px; bottom: 4px; width: 14px; border-radius: 7px; background: rgba(0, 0, 0, .58); }
.filter { height: 62px; display: flex; align-items: center; padding: 0 14px 0 9px; background: linear-gradient(#f2f2f2, #e6e6e6); color: #2f7ddb; font-size: 18px; }
.field { flex: 1; height: 36px; display: flex; align-items: center; gap: 10px; padding-left: 154px; margin-right: 26px; border: 2px solid #b5b5b5; border-radius: 6px; background: #fff; }
.field input { border: 0; width: 120px; background: none; padding: 0; font-size: 22px; }
.field input::placeholder { color: #b5b5b5; opacity: 1; }
.slices { display: flex; align-items: center; gap: 6px; margin-left: 8px; font-weight: 600; }

/* canvas */
.canvas { position: relative; background: linear-gradient(#efefef, #efefef 94%, #e0e0e0); }
.artboard { position: absolute; left: 471px; top: 159px; width: 448px; }
.name { display: block; height: 34px; padding-left: 8px; line-height: 28px; font-size: 22px; color: #858585; }
.frame { border: 4px solid #45b0f4; background: #fff; box-shadow: 0 2px 5px rgba(0, 0, 0, .3); }
.nav { height: 86px; background: #161616; color: #fff; }
.cell { display: grid; grid-template-columns: 1fr auto 1fr; align-items: center; height: 25px; padding: 0 6px; font-size: 17px; }
.clock { font-size: 18px; }
.carrier, .power { display: flex; align-items: center; gap: 6px; }
.power { justify-content: flex-end; gap: 5px; }
.dim { color: #777; }
.title { display: grid; grid-template-columns: 1fr auto 1fr; align-items: center; height: 61px; padding: 0 12px; font-size: 26px; font-weight: 300; }
.back { display: flex; align-items: center; gap: 5px; font-size: 22px; }
.hero { height: 307px; padding: 42px 18px 0; display: flex; flex-direction: column; align-items: center; }
.pic { position: relative; width: 70px; height: 70px; border: 1px solid #a8a8a8; background: #e6e9e9; }
.h { position: absolute; width: 14px; height: 14px; margin: -7px; border: 1px solid #8f8f8f; background: #fff; box-shadow: 0 1px 2px rgba(0, 0, 0, .2); }
.a, .b, .c { top: 0; }
.d, .e { top: 50%; }
.f, .g, .i { top: 100%; }
.a, .d, .f { left: 0; }
.b, .g { left: 50%; }
.c, .e, .i { left: 100%; }
.dark { width: 209px; height: 22px; background: #cbcbcc; }
.light { width: 98px; height: 11px; background: #ebebeb; }
.hero .dark { margin: 13px 0 7px; }
.cta { width: 100%; height: 59px; margin-top: 42px; display: grid; place-items: center; border-radius: 5px; background: #2b2b2b; }
.cta div { width: 98px; height: 11px; background: #fff; }
.entry { height: 98px; margin: 0 3px 0 18px; padding-top: 20px; display: flex; gap: 14px; border-top: 1px solid #e3e3e3; }
.hero + .entry { height: 99px; margin-left: 0; padding-left: 18px; }
.avatar { width: 56px; height: 56px; border-radius: 6px; background: #e7e9e9; }
.lines { display: grid; gap: 14px; align-content: start; padding-top: 5px; }
.cursor { position: absolute; left: 875px; top: 338px; filter: drop-shadow(0 6px 6px rgba(0, 0, 0, .35)); }

/* inspector */
.inspector { display: flex; flex-direction: column; background: #e2e2e2; border-left: 2px solid #b3b1b3; }
.align { height: 54px; display: flex; align-items: center; padding: 0 16px 0 13px; background: #f3f1f4; border-bottom: 2px solid #bdbbbd; }
.dv { margin-left: 25px; }
.align hr { width: 2px; height: 44px; margin: 0 18px; border: 0; background: #d3d3d3; }
.aligns { flex: 1; display: flex; justify-content: space-between; }
.inspector input[type=text] { width: 100%; height: 36px; padding: 0 6px; border: 1px solid #a9a9a9; background: #fff; }
.inspector input:disabled { color: #aaa; }
.unit { display: flex; flex-direction: column; align-items: center; font-size: 18px; line-height: 28px; }
.unit input { font-size: 22px; }
.geometry { height: 232px; padding: 18px 19px 0 15px; display: grid; grid-template-columns: 126px 1fr 34px 1fr; grid-auto-rows: 70px; border-bottom: 1px solid #cacaca; }
.label { line-height: 36px; width: 126px; flex: none; }
.lock { height: 36px; display: grid; place-items: center; }
.flip { width: 100%; height: 34px; margin: 1px 0; display: grid; grid-template-columns: 1fr 1fr; border: 1px solid #c9c9c9; border-radius: 6px; background: #fff; }
.flip button { display: grid; place-items: center; }
.flip button + button { border-left: 2px solid #ddd; }
.resizing { height: 136px; display: flex; align-items: center; padding-left: 15px; border-bottom: 1px solid #cacaca; }
.pins { width: 94px; height: 94px; }
.fixes { display: grid; gap: 18px; margin-left: 17px; }
.fixes label { display: flex; align-items: center; gap: 12px; white-space: nowrap; }
.fixes button { width: 38px; height: 38px; display: grid; place-items: center; border: 2px solid #bdbdbd; border-radius: 4px; }
.slide { display: flex; align-items: center; padding: 0 19px 0 15px; }
.radius { height: 72px; border-bottom: 1px solid #cacaca; }
.slide input[type=text] { width: 84px; flex: none; }
.range { appearance: none; flex: 1; min-width: 0; height: 24px; margin-right: 20px; background: none; }
.range::-webkit-slider-runnable-track { height: 6px; border-radius: 3px; background: #a9a9a9; }
.mid::-webkit-slider-runnable-track { background: linear-gradient(90deg, #3c8df5 34%, #a9a9a9 34%); }
.full::-webkit-slider-runnable-track { background: #3c8df5; }
.range::-webkit-slider-thumb { appearance: none; width: 22px; height: 22px; margin-top: -8px; border-radius: 50%; background: #fff; box-shadow: 0 0 2px rgba(0, 0, 0, .5); }
.shared { height: 73px; display: flex; align-items: center; justify-content: space-between; padding: 0 17px 0 21px; background: #fff; border-bottom: 1px solid #cacaca; }
.blend { height: 131px; padding-top: 19px; display: grid; gap: 17px; align-content: start; }
.pick { position: relative; width: 164px; height: 39px; display: flex; border-radius: 6px; background: #fff; box-shadow: 0 1px 2px rgba(0, 0, 0, .35); overflow: hidden; font-size: 22px; }
.wide { width: auto; flex: 1; }
.pick select { appearance: none; flex: 1; border: 0; padding: 0 17px; background: none; opacity: 1; }
.pick i { width: 33px; display: grid; place-items: center; pointer-events: none; background: linear-gradient(#5fa6f8, #1a6df2); color: #fff; }
.dis { background: #efefef; color: #8b8b8b; }
.dis i { background: none; color: #777; }
.head { height: 52px; display: flex; align-items: center; gap: 19px; padding: 0 16px 0 15px; border-top: 1px solid #cacaca; }
.head h2 { flex: 1; display: flex; align-items: center; gap: 14px; font-size: 22px; font-weight: 700; color: #444; }
.lit { background: #efefef; }
.paint { height: 104px; display: grid; grid-template-columns: 39px 88px 182px 84px; justify-items: start; align-items: start; padding: 17px 18px 0 14px; border-top: 1px solid #cacaca; }
.paint .unit { gap: 6px; white-space: nowrap; }
.paint .last { width: 84px; }
.paint .unit input { margin: 2px 0 1px; }
input[type=checkbox] { appearance: none; width: 24px; height: 24px; border: 1px solid #b5b5b5; border-radius: 5px; background: #fff; }
.paint input[type=checkbox] { margin-top: 9px; }
input[type=checkbox]:checked { border: 0; background: #2f86f5; display: grid; place-items: center; }
input[type=checkbox]:checked::before { content: ""; width: 14px; height: 7px; margin-bottom: 4px; border: solid #fff; border-width: 0 0 3px 3px; transform: rotate(-45deg); }
.swatch { width: 66px; height: 39px; padding: 6px 7px; border: 1px solid #bcbcbc; border-radius: 6px; background: #fff; }
.swatch i { display: block; height: 25px; border: 2px solid #a6a6a6; border-radius: 3px; background: #bcbcbc; }
.swatch .pale { background: #e5e8e8; }
.spacer { flex: 1; border-top: 1px solid #cacaca; }
.export { height: 62px; }

/* dock */
.desk { height: 119px; padding: 1px 74px 0; background: linear-gradient(90deg, #2a2123 32px, #7a7a7a 32px, #a9a9a9 74px, #8f8f8f 2486px, #76767a 2500px, #c6c6c6); }
.dock { height: 118px; display: flex; align-items: center; padding: 0 8px 6px 7px; border-radius: 12px 12px 0 0; background: linear-gradient(#b5b4b6, #c9c8ca 45%, #d5d4d6); }
.app-slot { flex: 1; position: relative; height: 112px; display: grid; place-items: center; }
.app-slot svg, .trash svg { width: 78px; height: 78px; overflow: visible; filter: drop-shadow(0 2px 2px rgba(0, 0, 0, .3)); }
.run::after { content: ""; position: absolute; bottom: -2px; width: 8px; height: 8px; border-radius: 50%; background: #484848; }
.dock-chat { --a: #56cf2c; --b: #f3f3f3; --eye: #1d3a12; --eye2: #666; }
.badge { position: absolute; top: 6px; right: 0; width: 38px; height: 36px; border-radius: 50%; background: #f0302c; color: #fff; font-size: 16px; line-height: 36px; text-align: center; }
.dock hr { width: 2px; height: 86px; margin: 0 20px; border: 0; background: #8c8b8e; }
.trash { width: 94px; display: grid; place-items: center; }
.trash svg { width: 64px; }

/* keystroke overlay */
.keys { position: absolute; left: 0; right: 0; bottom: 80px; margin: 0 auto; width: 696px; height: 171px; padding: 6px 0 0 8px; display: flex; align-items: center; justify-content: center; gap: 26px; border: 1px solid #222; border-radius: 24px; background: rgba(6, 6, 6, .67); color: #fff; font: 124px/165px Lato, sans-serif; }
.keys svg { filter: drop-shadow(0 2px 2px rgba(0, 0, 0, .5)); }
.keys span { margin-left: -14px; }
```
